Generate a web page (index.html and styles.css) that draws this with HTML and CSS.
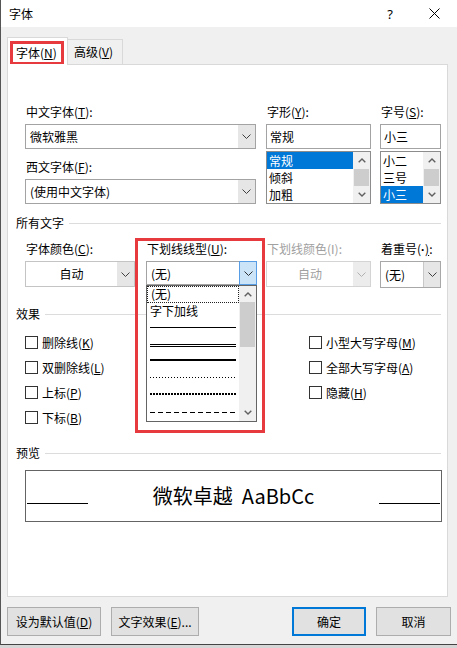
FILE: index.html
```html
<!DOCTYPE html>
<html lang="zh-CN">
<head>
<meta charset="utf-8">
<title>字体</title>
<link rel="stylesheet" href="styles.css">
</head>
<body>
<div class="window">
  <div class="titlebar">
    <span class="title">字体</span>
    <span class="help">?</span>
    <span class="close"><svg width="11" height="11" viewBox="0 0 11 11"><path d="M0.5 0.5L10.5 10.5M10.5 0.5L0.5 10.5" stroke="#000" stroke-width="1" fill="none"/></svg></span>
  </div>

  <div class="tabs">
    <div class="tab active"><span class="mark">字体(<u>N</u>)</span></div>
    <div class="tab">高级(<u>V</u>)</div>
  </div>

  <div class="panel">
    <div class="font-row">
      <div class="col c-name">
        <label class="lbl">中文字体(<u>T</u>):</label>
        <div class="combo"><span class="field">微软雅黑</span><span class="arrow"><svg width="9" height="5" viewBox="0 0 9 5"><path d="M0.5 0.5L4.5 4.5L8.5 0.5" stroke="#404040" fill="none"/></svg></span></div>
        <label class="lbl lbl-2">西文字体(<u>F</u>):</label>
        <div class="combo"><span class="field">(使用中文字体)</span><span class="arrow"><svg width="9" height="5" viewBox="0 0 9 5"><path d="M0.5 0.5L4.5 4.5L8.5 0.5" stroke="#404040" fill="none"/></svg></span></div>
      </div>
      <div class="col c-style">
        <label class="lbl">字形(<u>Y</u>):</label>
        <div class="textbox">常规</div>
        <div class="listbox">
          <div class="items">
            <div class="item sel">常规</div>
            <div class="item">倾斜</div>
            <div class="item">加粗</div>
          </div>
          <div class="sb">
            <span class="sb-btn"><svg width="8" height="5" viewBox="0 0 8 5"><path d="M0.7 4.3L4 1L7.3 4.3" stroke="#606060" stroke-width="1.4" fill="none"/></svg></span>
            <span class="sb-thumb"></span>
            <span class="sb-btn"><svg width="8" height="5" viewBox="0 0 8 5"><path d="M0.7 0.7L4 4L7.3 0.7" stroke="#606060" stroke-width="1.4" fill="none"/></svg></span>
          </div>
        </div>
      </div>
      <div class="col c-size">
        <label class="lbl">字号(<u>S</u>):</label>
        <div class="textbox">小三</div>
        <div class="listbox">
          <div class="items">
            <div class="item">小二</div>
            <div class="item">三号</div>
            <div class="item sel">小三</div>
          </div>
          <div class="sb">
            <span class="sb-btn"><svg width="8" height="5" viewBox="0 0 8 5"><path d="M0.7 4.3L4 1L7.3 4.3" stroke="#606060" stroke-width="1.4" fill="none"/></svg></span>
            <span class="sb-thumb"></span>
            <span class="sb-btn"><svg width="8" height="5" viewBox="0 0 8 5"><path d="M0.7 0.7L4 4L7.3 0.7" stroke="#606060" stroke-width="1.4" fill="none"/></svg></span>
          </div>
        </div>
      </div>
    </div>

    <div class="sec">所有文字</div>

    <div class="attr-row">
      <div class="acol a-color">
        <label class="lbl">字体颜色(<u>C</u>):</label>
        <div class="dd"><span class="dd-text">自动</span><span class="arrow gray"><svg width="9" height="5" viewBox="0 0 9 5"><path d="M0.5 0.5L4.5 4.5L8.5 0.5" stroke="#404040" fill="none"/></svg></span></div>
      </div>
      <div class="acol a-under">
        <label class="lbl">下划线线型(<u>U</u>):</label>
        <div class="combo u-combo">
          <span class="field">(无)</span><span class="arrow hot"><svg width="9" height="5" viewBox="0 0 9 5"><path d="M0.5 0.5L4.5 4.5L8.5 0.5" stroke="#303030" fill="none"/></svg></span>
          <div class="popup">
            <div class="p-items">
              <div class="p-item focus">(无)</div>
              <div class="p-item">字下加线</div>
              <div class="p-item"><svg width="86" height="17" viewBox="0 0 86 17"><line x1="0" y1="7.5" x2="86" y2="7.5" stroke="#000"/></svg></div>
              <div class="p-item"><svg width="86" height="17" viewBox="0 0 86 17"><line x1="0" y1="7.5" x2="86" y2="7.5" stroke="#000"/><line x1="0" y1="9.5" x2="86" y2="9.5" stroke="#000"/></svg></div>
              <div class="p-item"><svg width="86" height="17" viewBox="0 0 86 17"><line x1="0" y1="6" x2="86" y2="6" stroke="#000" stroke-width="2"/></svg></div>
              <div class="p-item"><svg width="86" height="17" viewBox="0 0 86 17"><line x1="0" y1="6.5" x2="86" y2="6.5" stroke="#000" stroke-dasharray="1 2"/></svg></div>
              <div class="p-item"><svg width="86" height="17" viewBox="0 0 86 17"><line x1="0" y1="6" x2="86" y2="6" stroke="#000" stroke-width="2" stroke-dasharray="2 1"/></svg></div>
              <div class="p-item"><svg width="86" height="17" viewBox="0 0 86 17"><line x1="0" y1="7.5" x2="86" y2="7.5" stroke="#000" stroke-dasharray="5 3"/></svg></div>
            </div>
            <div class="sb p-sb">
              <span class="sb-btn up"><svg width="8" height="5" viewBox="0 0 8 5"><path d="M0.7 4.3L4 1L7.3 4.3" stroke="#606060" stroke-width="1.4" fill="none"/></svg></span>
              <span class="sb-thumb p-thumb"></span>
              <span class="sb-fill"></span>
              <span class="sb-btn"><svg width="8" height="5" viewBox="0 0 8 5"><path d="M0.7 0.7L4 4L7.3 0.7" stroke="#606060" stroke-width="1.4" fill="none"/></svg></span>
            </div>
          </div>
        </div>
        <div class="annot"></div>
      </div>
      <div class="acol a-ucolor">
        <label class="lbl dis">下划线颜色(I):</label>
        <div class="dd disabled"><span class="dd-text">自动</span><span class="arrow gray"><svg width="9" height="5" viewBox="0 0 9 5"><path d="M0.5 0.5L4.5 4.5L8.5 0.5" stroke="#b0b0b0" fill="none"/></svg></span></div>
      </div>
      <div class="acol a-emph">
        <label class="lbl">着重号(<span class="dot">·</span><u>)</u>:</label>
        <div class="dd emph"><span class="field">(无)</span><span class="arrow gray"><svg width="9" height="5" viewBox="0 0 9 5"><path d="M0.5 0.5L4.5 4.5L8.5 0.5" stroke="#404040" fill="none"/></svg></span></div>
      </div>
    </div>

    <div class="sec sec-fx">效果</div>

    <div class="effects">
      <div class="chk"><span class="box"></span><span class="ct">删除线(<u>K</u>)</span></div>
      <div class="chk"><span class="box"></span><span class="ct">双删除线(<u>L</u>)</span></div>
      <div class="chk"><span class="box"></span><span class="ct">上标(<u>P</u>)</span></div>
      <div class="chk"><span class="box"></span><span class="ct">下标(<u>B</u>)</span></div>
      <div class="chk"><span class="box"></span><span class="ct">小型大写字母(<u>M</u>)</span></div>
      <div class="chk"><span class="box"></span><span class="ct">全部大写字母(<u>A</u>)</span></div>
      <div class="chk"><span class="box"></span><span class="ct">隐藏(<u>H</u>)</span></div>
    </div>

    <div class="sec sec-pv">预览</div>

    <div class="preview">
      <span class="pv-line"></span>
      <span class="pv-text">微软卓越&nbsp;&nbsp;AaBbCc</span>
      <span class="pv-line"></span>
    </div>
  </div>

  <div class="buttons">
    <button class="btn b-default">设为默认值(<u>D</u>)</button>
    <button class="btn b-effect">文字效果(<u>E</u>)...</button>
    <button class="btn b-ok">确定</button>
    <button class="btn b-cancel">取消</button>
  </div>
</div>
</body>
</html>
```

FILE: styles.css
```css
* { box-sizing: border-box; margin: 0; padding: 0; }
html, body { width: 457px; height: 648px; overflow: hidden; }
body {
  background: #d6d6d6;
  font-family: "Noto Sans CJK SC", "Microsoft YaHei", sans-serif;
  font-size: 12px;
  line-height: 16px;
  color: #000;
}
u { text-decoration: underline; text-underline-offset: 1px; }

.window {
  width: 457px;
  height: 645px;
  background: #f0f0f0;
  border-left: 1px solid #555;
  border-bottom: 1px solid #444;
  display: flex;
  flex-direction: column;
}

/* title bar */
.titlebar {
  height: 27px;
  background: #fff;
  display: flex;
  align-items: center;
  padding-left: 8px;
  flex-shrink: 0;
}
.title { font-size: 12px; }
.help {
  margin-left: auto;
  width: 30px;
  text-align: center;
  font-family: "Noto Sans", sans-serif;
  font-size: 13px;
}
.close {
  width: 30px;
  margin-left: 14px;
  margin-right: 8px;
  display: flex;
  justify-content: center;
}

/* tabs */
.tabs {
  height: 37px;
  display: flex;
  align-items: flex-end;
  padding-left: 6px;
  flex-shrink: 0;
}
.tab {
  height: 25px;
  width: 55px;
  background: #f0f0f0;
  border: 1px solid #d9d9d9;
  border-left: none;
  border-bottom: none;
  padding-left: 6px;
  line-height: 23px;
}
.tab.active {
  width: 61px;
  height: 28px;
  margin-bottom: -1px;
  background: #fff;
  border-left: 1px solid #d9d9d9;
  padding: 3px 0 0 2px;
  position: relative;
  z-index: 2;
}
.mark {
  display: block;
  width: 54px;
  height: 23px;
  border: 3px solid #e63a3f;
  border-bottom-width: 2px;
  padding-left: 3px;
  line-height: 17px;
}

/* panel */
.panel {
  margin-left: 6px;
  width: 441px;
  height: 533px;
  background: #fff;
  border: 1px solid #d9d9d9;
  padding: 39px 6px 0 8px;
  flex-shrink: 0;
}
.lbl { display: block; height: 16px; margin-bottom: 4px; padding-left: 1px; white-space: nowrap; }
.lbl.dis { color: #a0a0a0; }
.lbl-2 { margin-top: 10px; }
.dot { font-family: "Liberation Sans", sans-serif; font-weight: bold; }

.font-row { display: flex; margin-left: 9px; }
.c-name { width: 231px; margin-right: 10px; }
.c-style { width: 105px; margin-right: 9px; }
.c-size { width: 61px; }

.combo {
  height: 25px;
  border: 1px solid #a3a3a3;
  display: flex;
  background: #fff;
}
.field { flex: 1; padding-left: 4px; line-height: 23px; white-space: nowrap; }
.arrow {
  width: 17px;
  background: #e6e6e6;
  display: flex;
  align-items: center;
  justify-content: center;
}
.arrow.hot { background: #cce4f7; border: 1px solid #569de5; margin: -1px -1px -1px 0; width: 18px; }

.textbox {
  height: 25px;
  border: 1px solid #a3a3a3;
  padding-left: 3px;
  line-height: 23px;
}
.listbox {
  margin-top: 2px;
  height: 53px;
  border: 1px solid #8c8c8c;
  display: flex;
}
.items { flex: 1; }
.item { height: 17px; line-height: 17px; padding-left: 2px; }
.item.sel { background: #0078d7; color: #fff; }
.sb {
  width: 17px;
  background: #f0f0f0;
  display: flex;
  flex-direction: column;
}
.sb-btn { height: 17px; display: flex; align-items: center; justify-content: center; flex-shrink: 0; }
.sb-thumb { height: 17px; background: #cdcdcd; margin: 0 1px; flex-shrink: 0; }

/* section header */
.sec {
  height: 16px;
  margin-top: 11px;
  display: flex;
  align-items: center;
  gap: 5px;
}
.sec::after { content: ""; flex: 1; border-top: 1px solid #dcdcdc; }
.sec-fx { margin-top: 18px; }
.sec-pv { margin-top: 15px; }

/* all text row */
.attr-row { display: flex; margin-left: 9px; margin-top: 10px; }
.a-color { width: 110px; margin-right: 11px; }
.a-under { width: 111px; margin-right: 9px; position: relative; }
.a-ucolor { width: 105px; margin-right: 9px; }
.a-emph { width: 61px; }

.dd {
  height: 26px;
  border: 1px solid #c4c4c4;
  display: flex;
  background: #fff;
}
.dd-text { flex: 1; text-align: center; line-height: 24px; }
.dd.disabled { color: #a0a0a0; border-color: #d4d4d4; }
.dd.disabled .arrow { background: #ececec; }
.dd.emph { height: 27px; margin-top: 1px; border-color: #a8a8a8; }
.dd.emph .field { line-height: 25px; }
.dd.emph .arrow { border-left: 1px solid #c8c8c8; }

.u-combo { height: 24px; margin-top: 1px; position: relative; }
.popup {
  position: absolute;
  left: -1px;
  top: 23px;
  width: 111px;
  height: 137px;
  border: 1px solid #646464;
  background: #fff;
  display: flex;
  z-index: 3;
}
.p-items { flex: 1; }
.p-item { height: 17px; line-height: 16px; padding-left: 3px; }
.p-item svg { display: block; }
.p-item.focus { border: 1px dotted #222; padding-left: 3px; line-height: 14px; }
.p-sb { width: 17px; }
.p-sb .up { height: 16px; }
.p-thumb { height: 45px; }
.sb-fill { flex: 1; }

.annot {
  position: absolute;
  left: -11px;
  top: -3px;
  width: 130px;
  height: 195px;
  border: 3px solid #e63a3f;
  z-index: 4;
  pointer-events: none;
}

/* effects */
.effects {
  margin-left: 9px;
  margin-top: 8px;
  display: grid;
  grid-template-columns: 284px auto;
  grid-template-rows: repeat(4, 25px);
  grid-auto-flow: column;
}
.chk { display: flex; align-items: center; gap: 4px; }
.ct { white-space: nowrap; }
.box { width: 13px; height: 13px; border: 1px solid #333; background: #fff; flex-shrink: 0; }

/* preview */
.preview {
  margin-left: 9px;
  margin-top: 9px;
  width: 417px;
  height: 52px;
  border: 1px solid #646464;
  display: flex;
  padding: 0 1px;
}
.pv-line { width: 61px; height: 1px; background: #000; margin-top: 32px; flex-shrink: 0; }
.pv-text { flex: 1; text-align: center; font-size: 20px; line-height: 50px; }

/* buttons */
.buttons {
  display: flex;
  margin-top: 10px;
  padding: 0 6px;
  height: 29px;
}
.btn {
  height: 29px;
  background: #e1e1e1;
  border: 1px solid #adadad;
  font-family: inherit;
  font-size: 12px;
  color: #000;
}
.b-default { width: 94px; }
.b-effect { width: 88px; margin-left: 10px; }
.b-ok { width: 74px; margin-left: auto; border: 2px solid #0078d7; }
.b-cancel { width: 75px; margin-left: 10px; }
```
